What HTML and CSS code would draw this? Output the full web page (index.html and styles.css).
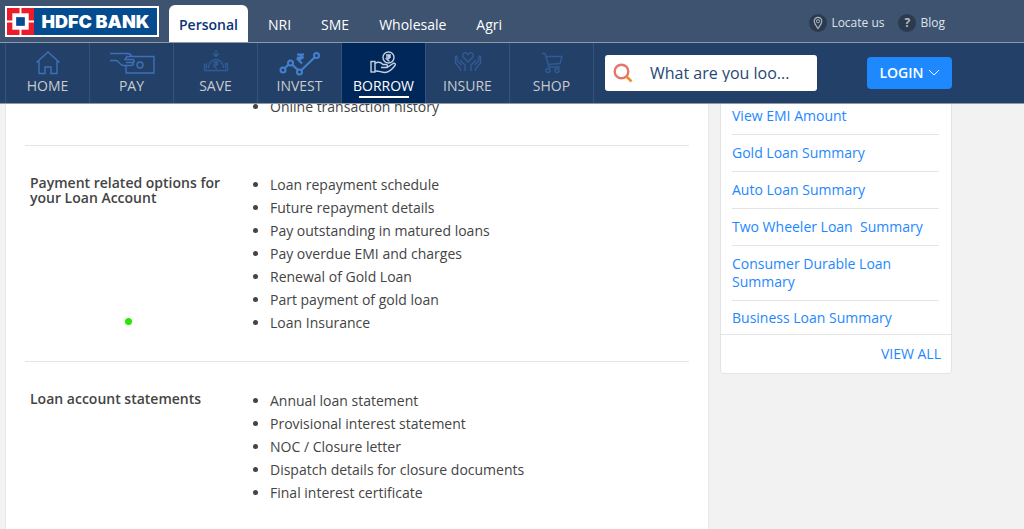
FILE: index.html
```html
<!DOCTYPE html>
<html lang="en">
<head>
<meta charset="utf-8">
<meta name="viewport" content="width=device-width, initial-scale=1">
<title>HDFC Bank - Loans</title>
<link rel="stylesheet" href="styles.css">
</head>
<body>
<header class="header">
  <div class="topbar">
    <div class="wrap topbar-inner">
      <a class="logo" href="#" aria-label="HDFC BANK home">
        <svg class="logo-mark" viewBox="0 0 28 28" aria-hidden="true">
          <rect width="28" height="28" fill="#ed1c2b"/>
          <path d="M14 0v28M0 14h28" stroke="#fff" stroke-width="2"/>
          <rect x="5.500" y="5.500" width="17" height="17" fill="#fff"/>
          <rect x="9.500" y="9.500" width="9" height="9" fill="#044b90"/>
        </svg>
        <span class="logo-name">HDFC BANK</span>
      </a>
      <nav class="segments" aria-label="Segments">
        <a class="segment segment-active" href="#">Personal</a>
        <a class="segment" href="#">NRI</a>
        <a class="segment" href="#">SME</a>
        <a class="segment" href="#">Wholesale</a>
        <a class="segment" href="#">Agri</a>
      </nav>
      <div class="utilities">
        <a class="utility" href="#">
          <svg class="utility-icon" viewBox="0 0 18 18" aria-hidden="true"><circle cx="9" cy="9" r="9" fill="#2c3a4d"/><path d="M9 14.500C7 11.500 5.200 9.500 5.200 7.200a3.800 3.800 0 0 1 7.600 0C12.800 9.500 11 11.500 9 14.500z" fill="none" stroke="#a9b2bd" stroke-width="1.200"/><circle cx="9" cy="7.200" r="1.600" fill="none" stroke="#a9b2bd"/></svg>
          <span>Locate us</span>
        </a>
        <a class="utility" href="#">
          <span class="help-icon" aria-hidden="true">?</span>
          <span>Blog</span>
        </a>
      </div>
    </div>
  </div>
  <div class="mainbar">
    <div class="wrap mainbar-inner">
      <nav class="menu" aria-label="Main">
        <a class="menu-item" href="#">
          <svg class="menu-icon" viewBox="0 0 48 26" aria-hidden="true"><path d="M12.500 12.500L24 2l11.500 10.500M15 11v12.500h6v-6.500h6v6.500h6V11"/></svg>
          <span class="menu-label">HOME</span>
        </a>
        <a class="menu-item" href="#">
          <svg class="menu-icon" viewBox="0 0 48 26" aria-hidden="true"><path d="M2 3.500h18c2 0 3 1 4 3h22v16.500H18v-7M2 10.500h6c3 0 3 4 7 5h8c3 0 3-3 0-3h-5h6c3 0 3-3 0-3h-7l2-3h5"/><circle cx="32" cy="15" r="3"/></svg>
          <span class="menu-label">PAY</span>
        </a>
        <a class="menu-item menu-item-dim" href="#">
          <svg class="menu-icon" viewBox="0 0 48 26" aria-hidden="true"><path d="M24 0v6M21 3.500l3 3 3-3M12.500 13.500v7h23v-7h-2v5M14.500 13.500v5M16.500 18a7.500 8.500 0 0 1 15 0M21.500 12h5M21.500 14h5M22 12c4 0 4 4 0 4l3 3"/></svg>
          <span class="menu-label">SAVE</span>
        </a>
        <a class="menu-item menu-item-bright" href="#">
          <svg class="menu-icon" viewBox="0 0 48 26" aria-hidden="true"><circle cx="7" cy="20" r="2.500"/><circle cx="14.500" cy="13" r="2.500"/><circle cx="23.500" cy="22" r="2.500"/><circle cx="40.500" cy="5.500" r="2.500"/><path d="M9 18l3.500-3.500M16.500 15l5.500 5M25.500 20L38.500 7.500M21 4.500h7M21 7.500h7M22 4.500c5 0 5 5 0 5l4 4"/></svg>
          <span class="menu-label">INVEST</span>
        </a>
        <a class="menu-item menu-item-active" href="#" aria-current="page">
          <svg class="menu-icon" viewBox="0 0 48 26" aria-hidden="true"><rect x="11" y="11.500" width="4" height="10.500"/><path d="M15 13.500c3-2 6-1 8 1h3c2 0 2 3 0 3h-5h6l6-4c2-1 3 1 2 2-3 4-6 7-10 7-4 0-6-2-10-1.500"/><circle cx="28.500" cy="7.500" r="5.500"/><path d="M26 5h5M26 7h5M26.500 5c4 0 4 4 0 4l3 2.500"/></svg>
          <span class="menu-label">BORROW</span>
        </a>
        <a class="menu-item menu-item-dim" href="#">
          <svg class="menu-icon" viewBox="0 0 48 26" aria-hidden="true"><path d="M24 12l-4.500-4.500c-3-4 2.500-6.500 4.500-3 2-3.500 7.500-1 4.500 3zM11.500 6v7l5 6v2M11.500 6c2 0 2 3 2 5l4 4M16 10l5 5v6M36.500 6v7l-5 6v2M36.500 6c-2 0-2 3-2 5l-4 4M32 10l-5 5v6"/></svg>
          <span class="menu-label">INSURE</span>
        </a>
        <a class="menu-item menu-item-dim" href="#">
          <svg class="menu-icon" viewBox="0 0 48 26" aria-hidden="true"><path d="M14 3.500h3l4 13.500h11M18 6.500h16l-2 7-12 1"/><circle cx="20" cy="20.500" r="2"/><circle cx="29" cy="20.500" r="2"/></svg>
          <span class="menu-label">SHOP</span>
        </a>
      </nav>
      <label class="search">
        <svg class="search-icon" viewBox="0 0 20 20" aria-hidden="true"><circle cx="8.500" cy="8.500" r="6.800" fill="none" stroke="#e6756b" stroke-width="2.400"/><path d="M13.500 13.500l5 5" stroke="#ef8b35" stroke-width="2.600"/></svg>
        <input class="search-input" type="text" placeholder="What are you loo..." aria-label="Search">
      </label>
      <button class="login" type="button">LOGIN
        <svg class="chevron" viewBox="0 0 12 8" aria-hidden="true"><path d="M1 1l5 5 5-5" fill="none" stroke="currentColor"/></svg>
      </button>
    </div>
  </div>
</header>
<div class="wrap page">
  <main class="content">
    <section class="row row-first">
      <h2 class="row-title"></h2>
      <ul class="options">
        <li>Online transaction history</li>
      </ul>
    </section>
    <section class="row">
      <h2 class="row-title">Payment related options for your Loan Account<span class="pointer"></span></h2>
      <ul class="options">
        <li>Loan repayment schedule</li>
        <li>Future repayment details</li>
        <li>Pay outstanding in matured loans</li>
        <li>Pay overdue EMI and charges</li>
        <li>Renewal of Gold Loan</li>
        <li>Part payment of gold loan</li>
        <li>Loan Insurance</li>
      </ul>
    </section>
    <section class="row">
      <h2 class="row-title">Loan account statements</h2>
      <ul class="options">
        <li>Annual loan statement</li>
        <li>Provisional interest statement</li>
        <li>NOC / Closure letter</li>
        <li>Dispatch details for closure documents</li>
        <li>Final interest certificate</li>
      </ul>
    </section>
  </main>
  <aside class="sidebar">
    <ul class="links">
      <li><a href="#">View EMI Amount</a></li>
      <li><a href="#">Gold Loan Summary</a></li>
      <li><a href="#">Auto Loan Summary</a></li>
      <li><a href="#">Two Wheeler Loan&nbsp; Summary</a></li>
      <li><a href="#">Consumer Durable Loan Summary</a></li>
      <li><a href="#">Business Loan Summary</a></li>
    </ul>
    <a class="view-all" href="#">VIEW ALL</a>
  </aside>
</div>
</body>
</html>
```
FILE: styles.css
```css
* { box-sizing: border-box; }
body {
  margin: 0;
  background: #f2f2f2;
  color: #444;
  font: 14px/18px "Open Sans", "Noto Sans", sans-serif;
}
a { color: inherit; text-decoration: none; }
ul, h2 { margin: 0; padding: 0; }
.wrap { max-width: 952px; padding-left: 5px; }

.header { position: fixed; top: 0; left: 0; right: 0; z-index: 10; border-bottom: 1px solid #8d99a9; }
.topbar { background: #3d536f; border-bottom: 1px solid #8b99a8; }
.topbar-inner { display: flex; align-items: flex-end; height: 42px; }
.logo {
  display: flex;
  align-items: center;
  align-self: flex-start;
  width: 154px;
  height: 31px;
  margin-top: 6px;
  background: #044b90;
  border: 2px solid #fff;
}
.logo-mark { width: 27px; height: 27px; }
.logo-name { flex: 1; text-align: center; color: #fff; font: 900 18px/27px Inter, sans-serif; }
.segments { display: flex; margin-left: 10px; }
.segment { padding: 11px 10px 8px; color: #fff; line-height: 18px; }
.segment + .segment { margin-left: 10px; }
.segment-active { background: #fff; color: #0a3478; font-weight: 600; border-radius: 6px 6px 0 0; }
.utilities { display: flex; gap: 14px; align-self: flex-start; margin: 14px 7px 0 auto; color: #dde3ea; font-size: 12px; }
.utility { display: flex; align-items: center; gap: 4px; }
.utility-icon, .help-icon { width: 18px; height: 18px; }
.help-icon { border-radius: 50%; background: #2c3a4d; color: #b4bcc6; text-align: center; font-weight: 700; }

.mainbar { background: #234068; }
.mainbar-inner { display: flex; align-items: center; height: 60px; }
.menu { display: flex; align-self: stretch; }
.menu-item {
  display: flex;
  flex-direction: column;
  align-items: center;
  width: 84px;
  padding-top: 7px;
  border-left: 1px solid #35527b;
  color: #c9cbce;
}
.menu-item:last-child { width: 85px; border-right: 1px solid #35527b; }
.menu-icon { width: 48px; height: 26px; fill: none; stroke: #3e70b8; stroke-width: 1.400; }
.menu-item-dim .menu-icon { stroke: #315b96; }
.menu-item-bright .menu-icon { stroke: #4480d0; stroke-width: 2; }
.menu-item-active { background: #00275a; color: #fff; }
.menu-item-active .menu-icon { stroke: #c3cfdf; }
.menu-label { line-height: 20px; }
.menu-item-active::after { content: ""; width: 50px; height: 2px; background: #fff; }
.search {
  display: flex;
  align-items: center;
  gap: 17px;
  width: 212px;
  height: 36px;
  margin-left: 11px;
  padding: 0 8px;
  background: #fff;
  border-radius: 3px;
}
.search-icon { width: 20px; height: 20px; flex: none; }
.search-input { flex: 1; min-width: 0; padding: 0; border: 0; outline: 0; background: none; font: inherit; font-size: 16px; color: #264877; }
.search-input::placeholder { color: #264877; opacity: 1; }
.login {
  display: flex;
  align-items: center;
  justify-content: center;
  gap: 4px;
  width: 86px;
  height: 32px;
  margin-left: 50px;
  border: 0;
  border-radius: 4px;
  background: #1e88ff;
  color: #fff;
  font: 600 14px/18px "Open Sans", sans-serif;
}
.chevron { width: 12px; height: 8px; }

.page { display: grid; grid-template-columns: minmax(0, 1fr) 232px; gap: 11px; min-height: 100vh; align-items: start; }
.content { align-self: stretch; padding: 95px 19px 0; background: #fff; border: solid #e8e8e8; border-width: 0 1px; }
.row { display: grid; grid-template-columns: 200px 1fr; column-gap: 24px; padding: 27px 0 27px 5px; }
.row-first { padding-top: 0; }
.row + .row { border-top: 1px solid #e4e4e4; }
.row-title { position: relative; padding-top: 2px; font-size: 14px; line-height: 15px; font-weight: 600; }
.pointer { position: absolute; left: 95px; bottom: 9px; width: 7px; height: 7px; border-radius: 50%; background: #27e600; }
.options { padding-left: 16px; line-height: 23px; }

.sidebar { padding-top: 97px; background: #fff; border: 1px solid #e4e4e4; border-radius: 0 0 4px 4px; color: #1e88ff; }
.links { list-style: none; padding: 0 12px 0 11px; }
.links li { padding: 9px 0; border-bottom: 1px solid #e4e4e4; }
.links li:last-child { border-bottom: 0; padding: 8px 0 7px; }
.view-all { display: block; padding: 10px; border-top: 1px solid #e4e4e4; text-align: right; }
```
